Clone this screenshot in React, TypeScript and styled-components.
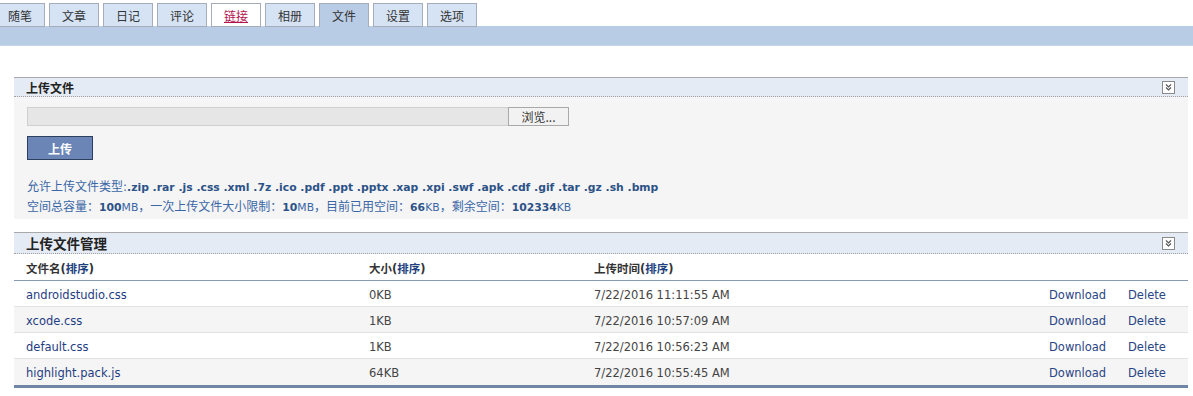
import React from "react";
import styled, { createGlobalStyle } from "styled-components";

const GlobalStyle = createGlobalStyle`
  body {
    margin: 0;
    background: #fff;
    font-family: "DejaVu Sans", "Noto Sans CJK SC", sans-serif;
    font-size: 11.5px;
    color: #333;
  }
`;

const TabRow = styled.div`
  display: flex;
  gap: 4px;
  padding-top: 3px;
  margin-left: -5px;
  height: 23px;
`;

const Tab = styled.a<{ $active?: boolean; $link?: boolean }>`
  box-sizing: border-box;
  width: 50px;
  height: 24px;
  display: flex;
  align-items: center;
  justify-content: center;
  font-size: 12px;
  color: ${(p) => (p.$link ? "#b5134f" : "#333")};
  text-decoration: ${(p) => (p.$link ? "underline" : "none")};
  background: ${(p) =>
    p.$active ? "#b9cce5" : p.$link ? "#fff" : "#d5e3f5"};
  border: 1px solid #a7adb8;
  border-bottom: ${(p) => (p.$active ? "none" : "1px solid #a7adb8")};
`;

const Bar = styled.div`
  height: 19px;
  background: #b9cce5;
  border-bottom: 1px solid #c8d6ea;
`;

const Content = styled.div`
  padding: 31px 5px 0 14px;
  display: flex;
  flex-direction: column;
  gap: 13px;
`;

const Panel = styled.section``;

const PanelHead = styled.div<{ $big?: boolean }>`
  display: flex;
  align-items: center;
  justify-content: space-between;
  height: ${(p) => (p.$big ? "20px" : "18px")};
  padding: 0 13px 0 12px;
  background: #e4ebf5;
  border-top: 1px solid #a9a9a9;
  border-bottom: 1px dotted #a0a0a0;
`;

const PanelTitle = styled.h3<{ $big?: boolean }>`
  margin: 0;
  font-size: ${(p) => (p.$big ? "13.5px" : "12px")};
  font-weight: bold;
  color: #222;
`;

const Toggle = styled.span`
  box-sizing: border-box;
  width: 13px;
  height: 13px;
  border: 1px solid #8a8a8a;
  background: #fff;
  display: flex;
  align-items: center;
  justify-content: center;
`;

const PanelBody = styled.div`
  background: #f5f5f5;
  padding: 10px 12px 2px 13px;
`;

const FileRow = styled.div`
  display: flex;
  height: 19px;
`;

const FileBox = styled.div`
  box-sizing: border-box;
  width: 481px;
  height: 19px;
  background: #e6e6e6;
  border: 1px solid #cfcfcf;
  border-right: none;
`;

const Browse = styled.button`
  box-sizing: border-box;
  width: 61px;
  height: 19px;
  padding: 0;
  font: 12px "Noto Sans CJK SC", sans-serif;
  color: #333;
  background: #f2f2f2;
  border: 1px solid #a9a9a9;
`;

const UploadButton = styled.button`
  display: block;
  box-sizing: border-box;
  margin-top: 10px;
  width: 66px;
  height: 24px;
  background: #6b86b6;
  border: 1px solid #2d3f5e;
  color: #fff;
  font: bold 12px "Noto Sans CJK SC", sans-serif;
`;

const Info = styled.div`
  margin-top: 17px;
  color: #3a66a6;
  font-size: 12px;
`;

const InfoLine = styled.div`
  height: 20px;
  line-height: 20px;
  white-space: nowrap;
`;

const Strong = styled.b`
  color: #2c5287;
  font-size: 10.8px;
`;

const Unit = styled.span`
  font-size: 10.8px;
`;

const Grid = styled.div<{ $head?: boolean; $alt?: boolean; $last?: boolean }>`
  display: grid;
  grid-template-columns: 355px 225px 1fr 79px 60px;
  align-items: center;
  box-sizing: border-box;
  height: ${(p) => (p.$head ? "27px" : p.$last ? "29px" : "26px")};
  padding-top: 2px;
  background: ${(p) => (p.$alt ? "#f5f5f5" : "#fff")};
  border-bottom: ${(p) =>
    p.$head
      ? "1px solid #8a99b2"
      : p.$last
      ? "3px solid #7086a6"
      : "1px solid #e2e2e2"};
  font-weight: ${(p) => (p.$head ? "bold" : "normal")};
  color: ${(p) => (p.$head ? "#333" : "#444")};
  & > :first-child {
    padding-left: 12px;
  }
`;

const Sort = styled.a`
  color: #1d3f7e;
`;

const FileLink = styled.a`
  color: #1f3c82;
`;

const Action = styled.a`
  color: #2a4585;
`;

function ToggleIcon() {
  return (
    <Toggle>
      <svg width="7" height="7" viewBox="0 0 7 7">
        <path d="M1 0.5 L3.5 3 L6 0.5 M1 3.5 L3.5 6 L6 3.5" stroke="#555" fill="none" strokeWidth="1.2" />
      </svg>
    </Toggle>
  );
}

const tabs = ["随笔", "文章", "日记", "评论", "链接", "相册", "文件", "设置", "选项"];

const files = [
  { name: "androidstudio.css", size: "0KB", time: "7/22/2016 11:11:55 AM" },
  { name: "xcode.css", size: "1KB", time: "7/22/2016 10:57:09 AM" },
  { name: "default.css", size: "1KB", time: "7/22/2016 10:56:23 AM" },
  { name: "highlight.pack.js", size: "64KB", time: "7/22/2016 10:55:45 AM" },
];

export default function App() {
  return (
    <>
      <GlobalStyle />
      <TabRow>
        {tabs.map((t) => (
          <Tab key={t} $active={t === "文件"} $link={t === "链接"}>
            {t}
          </Tab>
        ))}
      </TabRow>
      <Bar />
      <Content>
        <Panel>
          <PanelHead>
            <PanelTitle>上传文件</PanelTitle>
            <ToggleIcon />
          </PanelHead>
          <PanelBody>
            <FileRow>
              <FileBox />
              <Browse>浏览...</Browse>
            </FileRow>
            <UploadButton>上传</UploadButton>
            <Info>
              <InfoLine>
                允许上传文件类型:
                <Strong>
                  .zip .rar .js .css .xml .7z .ico .pdf .ppt .pptx .xap .xpi .swf .apk .cdf .gif .tar .gz .sh .bmp
                </Strong>
              </InfoLine>
              <InfoLine>
                空间总容量：<Strong>100</Strong>
                <Unit>MB</Unit>，一次上传文件大小限制：<Strong>10</Strong>
                <Unit>MB</Unit>，目前已用空间：<Strong>66</Strong>
                <Unit>KB</Unit>，剩余空间：<Strong>102334</Strong>
                <Unit>KB</Unit>
              </InfoLine>
            </Info>
          </PanelBody>
        </Panel>
        <Panel>
          <PanelHead $big>
            <PanelTitle $big>上传文件管理</PanelTitle>
            <ToggleIcon />
          </PanelHead>
          <Grid $head>
            <span>
              文件名(<Sort>排序</Sort>)
            </span>
            <span>
              大小(<Sort>排序</Sort>)
            </span>
            <span>
              上传时间(<Sort>排序</Sort>)
            </span>
            <span />
            <span />
          </Grid>
          {files.map((f, i) => (
            <Grid key={f.name} $alt={i % 2 === 1} $last={i === files.length - 1}>
              <FileLink>{f.name}</FileLink>
              <span>{f.size}</span>
              <span>{f.time}</span>
              <Action>Download</Action>
              <Action>Delete</Action>
            </Grid>
          ))}
        </Panel>
      </Content>
    </>
  );
}
